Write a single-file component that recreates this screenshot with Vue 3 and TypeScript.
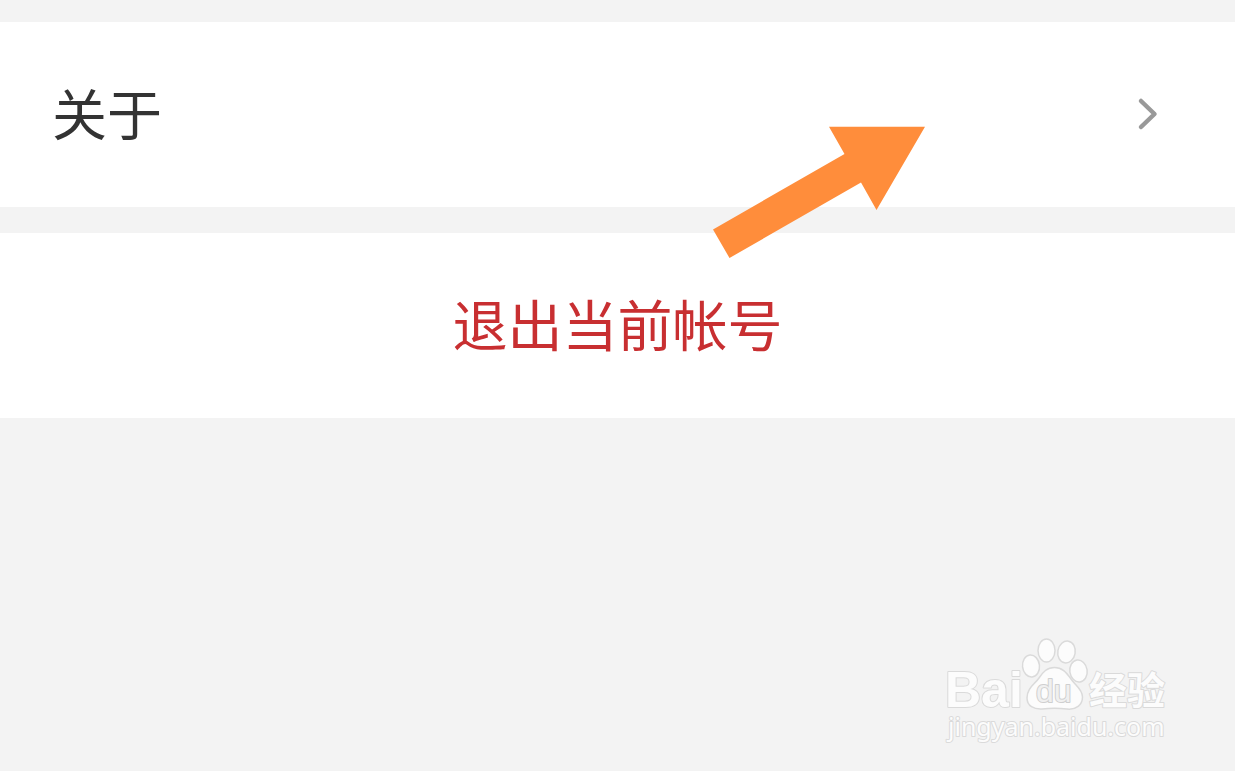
<script setup lang="ts">
const aboutLabel: string = '关于'
const logoutLabel: string = '退出当前帐号'
const toes = [
  { cx: 91, cy: 36, rx: 8.5, ry: 11, tilt: -6 },
  { cx: 106.5, cy: 20.5, rx: 8.5, ry: 11.5, tilt: 0 },
  { cx: 126.5, cy: 22, rx: 8.7, ry: 11, tilt: 10 },
  { cx: 138.5, cy: 41, rx: 8.7, ry: 11, tilt: -8 },
]
</script>

<template>
  <main class="page">
    <button class="row about" type="button">
      <span>{{ aboutLabel }}</span>
      <svg class="chevron" viewBox="0 0 24 36" aria-hidden="true">
        <path d="M6 5 19.500 18 6 31" />
      </svg>
    </button>
    <button class="row logout" type="button">{{ logoutLabel }}</button>

    <svg class="arrow" viewBox="0 0 212 132" aria-hidden="true">
      <path d="M116 .7H212L163.500 84 148 56.500 16.500 132 0 103.500 131.500 28Z" />
    </svg>

    <svg class="watermark" viewBox="0 0 240 125" role="img" aria-label="Baidu 经验">
      <text class="brand" x="5" y="77">Bai</text>
      <ellipse
        v-for="toe in toes"
        :key="toe.cx"
        :cx="toe.cx"
        :cy="toe.cy"
        :rx="toe.rx"
        :ry="toe.ry"
        :transform="`rotate(${toe.tilt} ${toe.cx} ${toe.cy})`"
      />
      <path
        d="M114.500 37.500C107 37.500 103 42 99 48C95 54 87 58 87 68C87 76 94 79.500 102 79C110 78 119 78 127 79C136 80 142.500 75 142.500 67C142.500 59 135 55 131 49C126 42 122 37.500 114.500 37.500Z"
      />
      <text class="du" x="96" y="72">du</text>
      <text class="cjk" x="149" y="74">经验</text>
      <text class="site" x="8" y="106">jingyan.baidu.com</text>
    </svg>
  </main>
</template>

<style>
body {
  margin: 0;
  background: #f3f3f3;
}
</style>

<style scoped>
.page {
  position: relative;
  box-sizing: border-box;
  min-height: 100vh;
  padding-top: 22px;
  display: flex;
  flex-direction: column;
  gap: 26px;
  background: #f3f3f3;
  font-family: "Noto Sans CJK SC", sans-serif;
}

.row {
  display: flex;
  align-items: center;
  width: 100%;
  margin: 0;
  padding: 49px 76px 56px 52px;
  border: 0;
  background: #fff;
  font-family: inherit;
  font-size: 55px;
  line-height: 80px;
  cursor: pointer;
}

.about {
  justify-content: space-between;
  color: #333;
}

.logout {
  justify-content: center;
  padding-right: 52px;
  color: #c82f31;
}

.chevron {
  width: 24px;
  height: 40px;
  margin-top: 6px;
  fill: none;
  stroke: #999;
  stroke-width: 4.5;
  stroke-linecap: round;
  stroke-linejoin: round;
}

.arrow {
  position: absolute;
  top: 126px;
  right: 310px;
  width: 212px;
  height: 132px;
  fill: #ff8d3b;
  pointer-events: none;
}

.watermark {
  position: absolute;
  right: 55px;
  bottom: 16px;
  width: 240px;
  height: 125px;
  overflow: visible;
  fill: #fcfcfc;
  stroke: #dadada;
  stroke-width: 1.5;
  stroke-linejoin: round;
  pointer-events: none;
}

.watermark text {
  paint-order: stroke;
  stroke-width: 2;
}

.watermark .brand {
  font: 700 50px "Liberation Sans", sans-serif;
}

.watermark .du {
  font: 400 32px "Liberation Sans", sans-serif;
  fill: #f0f0f0;
  stroke: #cfcfcf;
}

.watermark .cjk {
  font: 700 38px "Noto Sans CJK SC", sans-serif;
}

.watermark .site {
  font: 400 25px "Noto Sans", sans-serif;
}
</style>
